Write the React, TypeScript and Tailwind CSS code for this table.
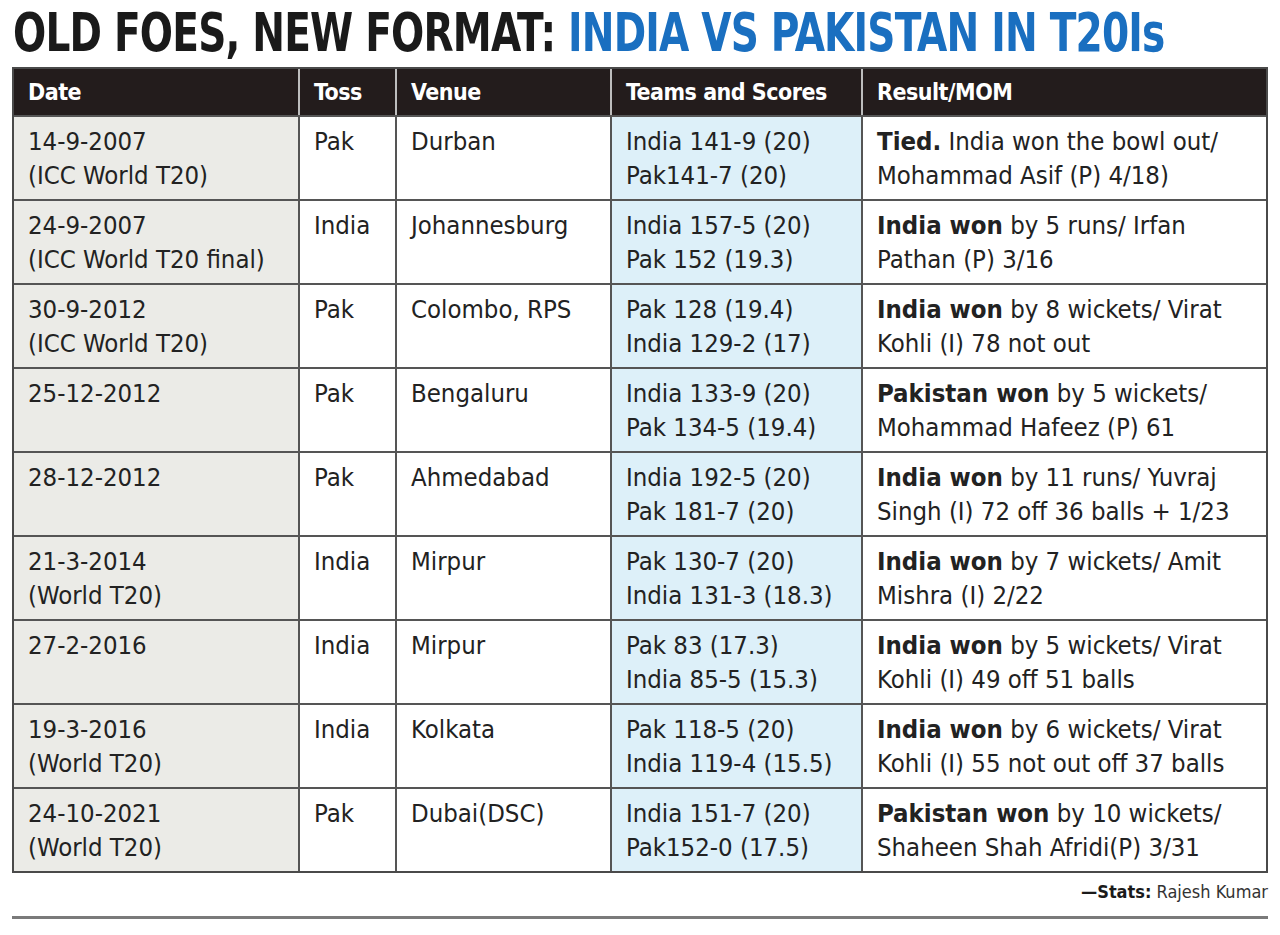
import React from "react";

type Row = {
  date: string;
  event?: string;
  toss: string;
  venue: string;
  s1: string;
  s2: string;
  bold: string;
  rest1: string;
  line2: string;
};

const rows: Row[] = [
  { date: "14-9-2007", event: "(ICC World T20)", toss: "Pak", venue: "Durban", s1: "India 141-9 (20)", s2: "Pak141-7 (20)", bold: "Tied.", rest1: " India won the bowl out/", line2: "Mohammad Asif (P) 4/18)" },
  { date: "24-9-2007", event: "(ICC World T20 final)", toss: "India", venue: "Johannesburg", s1: "India 157-5 (20)", s2: "Pak 152 (19.3)", bold: "India won", rest1: " by 5 runs/ Irfan", line2: "Pathan (P) 3/16" },
  { date: "30-9-2012", event: "(ICC World T20)", toss: "Pak", venue: "Colombo, RPS", s1: "Pak 128 (19.4)", s2: "India 129-2 (17)", bold: "India won", rest1: " by 8 wickets/ Virat", line2: "Kohli (I) 78 not out" },
  { date: "25-12-2012", toss: "Pak", venue: "Bengaluru", s1: "India 133-9 (20)", s2: "Pak 134-5 (19.4)", bold: "Pakistan won", rest1: " by 5 wickets/", line2: "Mohammad Hafeez (P) 61" },
  { date: "28-12-2012", toss: "Pak", venue: "Ahmedabad", s1: "India 192-5 (20)", s2: "Pak 181-7 (20)", bold: "India won", rest1: " by 11 runs/ Yuvraj", line2: "Singh (I) 72 off 36 balls + 1/23" },
  { date: "21-3-2014", event: "(World T20)", toss: "India", venue: "Mirpur", s1: "Pak 130-7 (20)", s2: "India 131-3 (18.3)", bold: "India won", rest1: " by 7 wickets/ Amit", line2: "Mishra (I) 2/22" },
  { date: "27-2-2016", toss: "India", venue: "Mirpur", s1: "Pak 83 (17.3)", s2: "India 85-5 (15.3)", bold: "India won", rest1: " by 5 wickets/ Virat", line2: "Kohli (I) 49 off 51 balls" },
  { date: "19-3-2016", event: "(World T20)", toss: "India", venue: "Kolkata", s1: "Pak 118-5 (20)", s2: "India 119-4 (15.5)", bold: "India won", rest1: " by 6 wickets/ Virat", line2: "Kohli (I) 55 not out off 37 balls" },
  { date: "24-10-2021", event: "(World T20)", toss: "Pak", venue: "Dubai(DSC)", s1: "India 151-7 (20)", s2: "Pak152-0 (17.5)", bold: "Pakistan won", rest1: " by 10 wickets/", line2: "Shaheen Shah Afridi(P) 3/31" },
];

const bodyFont = { fontFamily: '"DejaVu Sans Condensed", "Liberation Sans Narrow", "DejaVu Sans", sans-serif' };

export default function App() {
  return (
    <div className="w-[1280px] h-[935px] bg-white overflow-hidden" style={bodyFont}>
      <div className="h-[67px] pl-[13px] pt-[5px] overflow-hidden">
        <h1 className="inline-block origin-left scale-x-[0.82] text-[53px] leading-[56px] font-bold tracking-[-1px] text-[#1a1a1a] whitespace-nowrap">
          OLD FOES, NEW FORMAT: <span className="text-[#1a6fc0]">INDIA VS PAKISTAN IN T20Is</span>
        </h1>
      </div>
      <div className="ml-[12px] w-[1256px] border-2 border-[#4a4a4a]">
        <div className="grid grid-cols-[284px_97px_215px_251px_1fr] h-[46px] bg-[#231c1c] text-white font-bold text-[23px] tracking-[-0.5px] leading-[46px]">
          <div className="pl-[14px]">Date</div>
          <div className="pl-[14px] border-l-2 border-[#bdbdbd]">Toss</div>
          <div className="pl-[14px] border-l-2 border-[#bdbdbd]">Venue</div>
          <div className="pl-[14px] border-l-2 border-[#bdbdbd]">Teams and Scores</div>
          <div className="pl-[14px] border-l-2 border-[#bdbdbd]">Result/MOM</div>
        </div>
        {rows.map((r, i) => (
          <div
            key={i}
            className="grid grid-cols-[284px_97px_215px_251px_1fr] h-[84px] border-t-2 border-[#555555] text-[25.5px] leading-[34px] text-[#222222]"
          >
            <div className="bg-[#ebebe7] pl-[14px] pt-[7px]">
              <div>{r.date}</div>
              {r.event && <div>{r.event}</div>}
            </div>
            <div className="bg-white pl-[14px] pt-[7px] border-l-2 border-[#555555]">{r.toss}</div>
            <div className="bg-white pl-[14px] pt-[7px] border-l-2 border-[#555555]">{r.venue}</div>
            <div className="bg-[#ddf0f9] pl-[14px] pt-[7px] border-l-2 border-[#555555]">
              <div>{r.s1}</div>
              <div>{r.s2}</div>
            </div>
            <div className="bg-white pl-[14px] pt-[7px] border-l-2 border-[#555555]">
              <div className="whitespace-nowrap">
                <span className="font-bold">{r.bold}</span>
                {r.rest1}
              </div>
              <div className="whitespace-nowrap">{r.line2}</div>
            </div>
          </div>
        ))}
      </div>
      <div className="w-[1268px] text-right text-[18px] leading-[24px] pt-[7px] text-[#333333]">
        <span className="font-bold text-[#1a1a1a]">—Stats:</span> Rajesh Kumar
      </div>
      <div className="ml-[12px] mt-[12px] w-[1256px] h-[3px] bg-[#7a7a7a]" />
    </div>
  );
}
